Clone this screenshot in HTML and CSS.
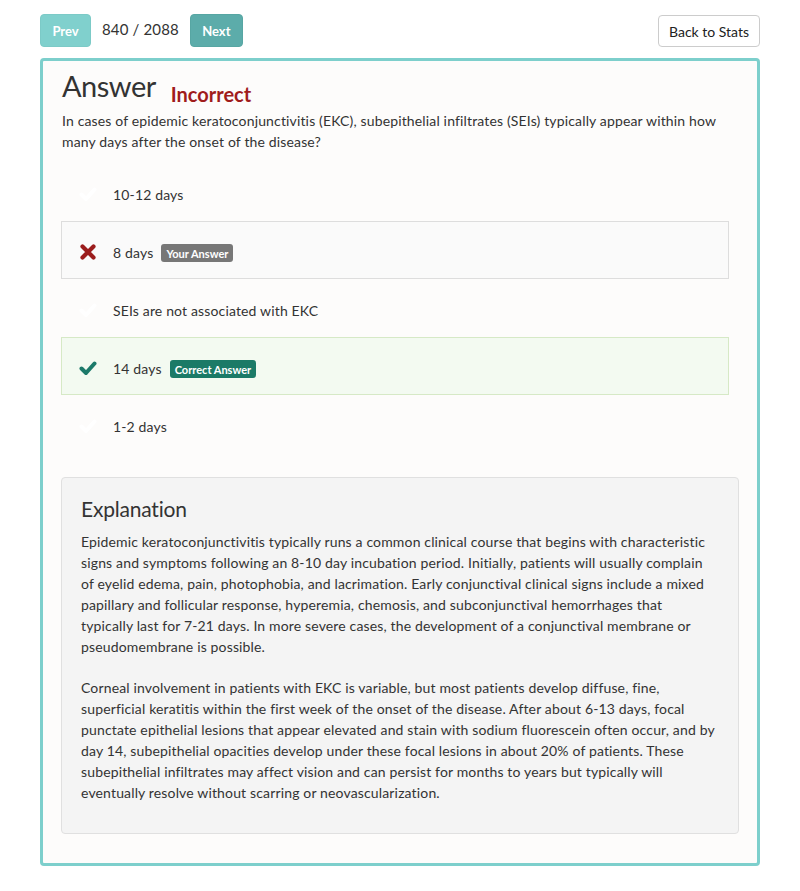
FILE: index.html
```
<!DOCTYPE html>
<html>
<head>
<meta charset="utf-8">
<link rel="stylesheet" href="styles.css">
</head>
<body>
<div class="topbar">
  <div class="nav">
    <button class="btn btn-prev">Prev</button>
    <span class="counter">840 / 2088</span>
    <button class="btn btn-next">Next</button>
  </div>
  <button class="btn-back">Back to Stats</button>
</div>
<div class="card">
  <div class="title-row">
    <h1 class="title">Answer</h1>
    <span class="status">Incorrect</span>
  </div>
  <p class="question">In cases of epidemic keratoconjunctivitis (EKC), subepithelial infiltrates (SEIs) typically appear within how many days after the onset of the disease?</p>
  <ul class="options">
    <li class="option">
      <svg class="icon" viewBox="0 0 18 16"><polyline points="2.5,8.5 7,13 15.5,3.5" fill="none" stroke="#fff" stroke-width="4" stroke-linecap="round" stroke-linejoin="round"/></svg>
      <span>10-12 days</span>
    </li>
    <li class="option option-wrong">
      <svg class="icon" viewBox="0 0 18 16"><path d="M3.5 2.5 L14.5 13.5 M14.5 2.5 L3.5 13.5" fill="none" stroke="#9b1c1c" stroke-width="4.2" stroke-linecap="round"/></svg>
      <span>8 days</span>
      <span class="badge badge-grey">Your Answer</span>
    </li>
    <li class="option">
      <svg class="icon" viewBox="0 0 18 16"><polyline points="2.5,8.5 7,13 15.5,3.5" fill="none" stroke="#fff" stroke-width="4" stroke-linecap="round" stroke-linejoin="round"/></svg>
      <span>SEIs are not associated with EKC</span>
    </li>
    <li class="option option-right">
      <svg class="icon" viewBox="0 0 18 16"><polyline points="2.5,8.5 7,13 15.5,3.5" fill="none" stroke="#1c7a6a" stroke-width="4" stroke-linecap="round" stroke-linejoin="round"/></svg>
      <span>14 days</span>
      <span class="badge badge-green">Correct Answer</span>
    </li>
    <li class="option">
      <svg class="icon" viewBox="0 0 18 16"><polyline points="2.5,8.5 7,13 15.5,3.5" fill="none" stroke="#fff" stroke-width="4" stroke-linecap="round" stroke-linejoin="round"/></svg>
      <span>1-2 days</span>
    </li>
  </ul>
  <div class="explanation">
    <h2 class="exp-title">Explanation</h2>
    <p>Epidemic keratoconjunctivitis typically runs a common clinical course that begins with characteristic signs and symptoms following an 8-10 day incubation period. Initially, patients will usually complain of eyelid edema, pain, photophobia, and lacrimation. Early conjunctival clinical signs include a mixed papillary and follicular response, hyperemia, chemosis, and subconjunctival hemorrhages that typically last for 7-21 days. In more severe cases, the development of a conjunctival membrane or pseudomembrane is possible.</p>
    <p>Corneal involvement in patients with EKC is variable, but most patients develop diffuse, fine, superficial keratitis within the first week of the onset of the disease. After about 6-13 days, focal punctate epithelial lesions that appear elevated and stain with sodium fluorescein often occur, and by day 14, subepithelial opacities develop under these focal lesions in about 20% of patients. These subepithelial infiltrates may affect vision and can persist for months to years but typically will eventually resolve without scarring or neovascularization.</p>
  </div>
</div>
</body>
</html>
```
FILE: styles.css
```
* { box-sizing: border-box; }
body {
  margin: 0;
  background: #fff;
  font-family: Lato, "Open Sans", sans-serif;
  font-size: 14px;
  line-height: 21px;
  letter-spacing: 0.15px;
  color: #333;
}
.topbar {
  display: flex;
  justify-content: space-between;
  align-items: flex-start;
  padding: 14px 40px 0 40px;
  height: 58px;
}
.nav {
  display: flex;
  align-items: center;
}
.btn {
  font-family: Lato, sans-serif;
  font-weight: bold;
  font-size: 13px;
  color: #fff;
  border: 1px solid transparent;
  border-radius: 4px;
  height: 33px;
  padding: 0 11px;
  cursor: pointer;
}
.btn-prev { background: #80d0cd; border-color: #7ccac7; width: 51px; }
.btn-next { background: #5cacaa; border-color: #57a6a3; width: 53px; }
.counter {
  font-size: 15px;
  margin: 0 11px 0 11px;
  color: #333;
  position: relative;
  top: -1px;
}
.btn-back {
  font-family: Lato, sans-serif;
  font-size: 14px;
  color: #222;
  background: #fff;
  border: 1px solid #ccc;
  border-radius: 4px;
  height: 32px;
  width: 102px;
  margin-top: 1px;
  padding: 0;
}
.card {
  margin: 0 40px;
  border: 3px solid #7dcfcc;
  border-radius: 4px;
  background: #fdfcfb;
  padding: 8px 18px 30px 18px;
  height: 808px;
}
.title-row {
  display: flex;
  align-items: baseline;
}
.title {
  margin: 0 0 0 1px;
  font-size: 29px;
  letter-spacing: -0.5px;
  font-weight: normal;
  line-height: 33px;
  color: #333;
}
.status {
  font-size: 20px;
  font-weight: bold;
  letter-spacing: 0;
  color: #a01c1c;
  margin-left: 15px;
  position: relative;
  top: 5px;
}
.question {
  margin: 8px 0 11px 1px;
}
.options {
  list-style: none;
  margin: 0 10px 24px 0;
  padding: 0;
}
.option {
  display: flex;
  align-items: center;
  height: 58px;
  padding-left: 17px;
  padding-top: 4px;
  border: 1px solid transparent;
}
.option-wrong { background: #fafafa; border-color: #dddddd; }
.option-right { background: #f3faf1; border-color: #d6e9c6; }
.icon {
  width: 18px;
  height: 16px;
  margin-right: 16px;
  flex: none;
}
.badge {
  font-size: 11px;
  font-weight: bold;
  letter-spacing: 0;
  color: #fff;
  border-radius: 3px;
  line-height: 13px;
  padding: 3px 5px 2px 5px;
  margin-left: 8px;
  position: relative;
  top: 1px;
}
.badge-grey { background: #777; }
.badge-green { background: #1b7a67; }
.explanation {
  background: #f4f4f4;
  border: 1px solid #e0e0e0;
  border-radius: 4px;
  padding: 19px 21px 20px 19px;
}
.exp-title {
  margin: 0 0 10px 0;
  font-size: 21px;
  letter-spacing: -0.2px;
  font-weight: normal;
  line-height: 24px;
  color: #333;
}
.explanation p {
  margin: 0 0 20px 0;
}
.explanation p:last-child { margin-bottom: 10px; }
```
